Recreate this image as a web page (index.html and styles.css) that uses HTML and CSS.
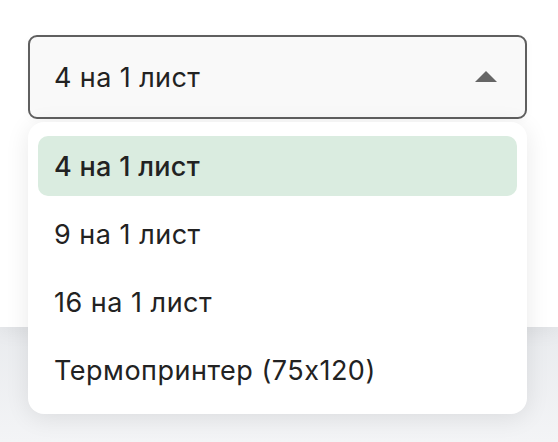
FILE: index.html
```html
<!DOCTYPE html>
<html lang="ru">
<head>
<meta charset="utf-8">
<link rel="stylesheet" href="styles.css">
</head>
<body>
<div class="page">
  <div class="panel">
    <div class="field">
      <div class="select">
        <span class="value">4 на 1 лист</span>
        <svg class="caret" width="22" height="11" viewBox="0 0 22 11"><path d="M0 11 L11 0 L22 11 Z" fill="#666"/></svg>
      </div>
      <ul class="menu">
        <li class="option active">4 на 1 лист</li>
        <li class="option">9 на 1 лист</li>
        <li class="option">16 на 1 лист</li>
        <li class="option">Термопринтер (75x120)</li>
      </ul>
    </div>
  </div>
  <div class="below"></div>
</div>
</body>
</html>
```
FILE: styles.css
```css
* { box-sizing: border-box; }
html, body { margin: 0; padding: 0; }
body {
  font-family: Inter, "Noto Sans", sans-serif;
  color: #222;
  background: #f1f2f4;
  width: 558px;
  height: 442px;
  overflow: hidden;
}
.page { display: flex; flex-direction: column; height: 442px; }
.panel {
  height: 327px;
  background: #fff;
  padding: 35px 31px 0 28px;
  box-shadow: 0 6px 18px rgba(0, 0, 0, 0.05);
  position: relative;
  z-index: 1;
}
.below {
  flex: 1;
  background: linear-gradient(#e9ebee, #f3f4f6);
}
.field { position: relative; width: 499px; }
.select {
  height: 84px;
  border: 2px solid #5f5f5f;
  border-radius: 9px;
  background: #f9f9f9;
  display: flex;
  align-items: center;
  justify-content: space-between;
  padding: 0 28px 0 24px;
  box-shadow: 0 2px 10px rgba(0,0,0,0.03);
}
.value { font-size: 27px; letter-spacing: 0.4px; }
.caret { display: block; margin-top: -2px; }
.menu {
  position: absolute;
  top: 87px;
  left: 0;
  right: 0;
  margin: 0;
  list-style: none;
  background: #fff;
  border-radius: 16px;
  padding: 14px 10px;
  display: flex;
  flex-direction: column;
  gap: 8px;
  box-shadow: 0 4px 24px rgba(0, 0, 0, 0.09);
  z-index: 2;
}
.option {
  height: 60px;
  display: flex;
  align-items: center;
  padding: 0 16px;
  border-radius: 10px;
  font-size: 27px;
  letter-spacing: 0.5px;
}
.option.active {
  background: #daece0;
  font-weight: 500;
  letter-spacing: 0.3px;
}
```
